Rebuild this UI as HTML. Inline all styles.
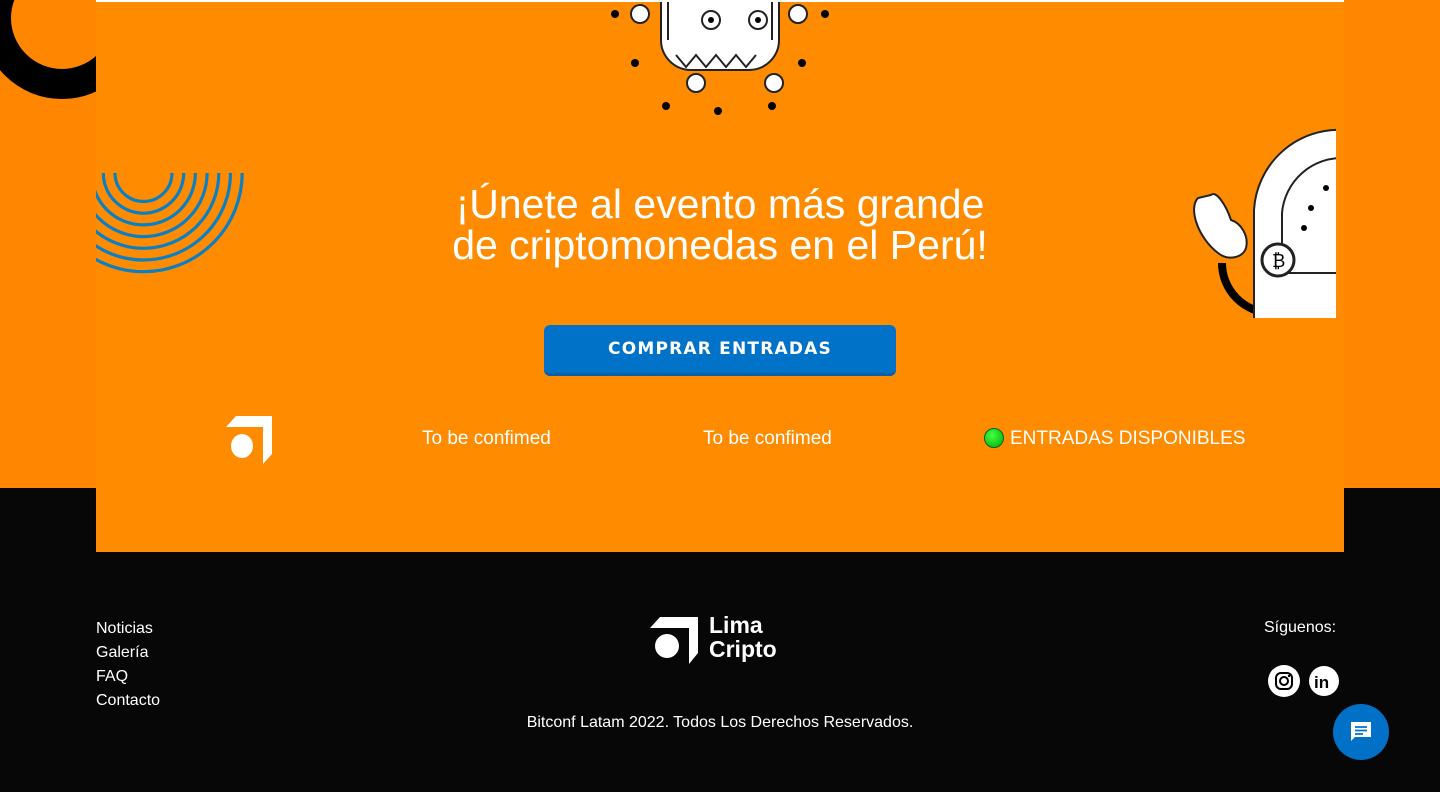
<!DOCTYPE html>
<html><head><meta charset="utf-8"><style>
*{margin:0;padding:0;box-sizing:border-box}
body{width:1440px;height:792px;overflow:hidden;background:#070707;font-family:"Liberation Sans",sans-serif;position:relative}
.top{position:absolute;left:0;top:0;width:1440px;height:488px;background:#ff8600}
.box{position:absolute;left:96px;top:0;width:1248px;height:552px;background:#ff8b00;overflow:hidden}
.line{position:absolute;left:96px;top:0;width:1248px;height:2px;background:#fff}
h1{position:absolute;left:0;width:1440px;top:184px;text-align:center;color:#fff;font-weight:normal;font-size:41px;line-height:41px}
.btn{position:absolute;left:544px;top:325px;width:352px;height:51px;background:#0072c7;border-radius:6px;border-bottom:3px solid #0560a8;color:#fff;text-align:center;font:bold 17px/48px "DejaVu Sans",sans-serif;letter-spacing:1.2px}
.t{position:absolute;top:428px;color:#fff;font-size:19px}
.f{position:absolute;color:#fff;font-size:16px}
</style></head><body>
<div class="top"></div>
<svg style="position:absolute;left:0;top:0" width="96" height="110"><circle cx="62" cy="18" r="66" fill="none" stroke="#000" stroke-width="30"/></svg>
<div class="box">
<svg style="position:absolute;left:0;top:173px" width="160" height="110">
<g fill="none" stroke="#0a7fc4" stroke-width="3.2" transform="translate(47.5,0)">
<path d="M-28.5 0a28.5 28.5 0 0 0 57 0"/><path d="M-40.2 0a40.2 40.2 0 0 0 80.4 0"/><path d="M-51.9 0a51.9 51.9 0 0 0 103.8 0"/><path d="M-63.6 0a63.6 63.6 0 0 0 127.2 0"/><path d="M-75.3 0a75.3 75.3 0 0 0 150.6 0"/><path d="M-87 0a87 87 0 0 0 174 0"/><path d="M-98.7 0a98.7 98.7 0 0 0 197.4 0"/></g></svg>
<svg style="position:absolute;left:500px;top:0" width="250" height="120">
<g stroke="#222" stroke-width="2">
<path d="M65 0v40a30 30 0 0 0 30 30h58a30 30 0 0 0 30-30V0z" fill="#fff"/>
<path d="M72 0v40M176 0v40M80 55l10 12 10-12 10 12 10-12 10 12 10-12 10 12 10-12" fill="none"/>
<circle cx="115" cy="20" r="9" fill="#fff"/><circle cx="162" cy="20" r="9" fill="#fff"/>
<circle cx="44" cy="14" r="9" fill="#fff"/><circle cx="202" cy="14" r="9" fill="#fff"/>
<circle cx="100" cy="83" r="9" fill="#fff"/><circle cx="178" cy="83" r="9" fill="#fff"/></g>
<g fill="#000"><circle cx="115" cy="20" r="3"/><circle cx="162" cy="20" r="3"/><circle cx="19" cy="14" r="4"/><circle cx="229" cy="14" r="4"/><circle cx="39" cy="63" r="4"/><circle cx="206" cy="63" r="4"/><circle cx="70" cy="106" r="4"/><circle cx="122" cy="111" r="4"/><circle cx="176" cy="106" r="4"/></g></svg>
<svg style="position:absolute;left:1090px;top:128px" width="150" height="190">
<path d="M36 135a50 50 0 0 0 100 0" fill="none" stroke="#000" stroke-width="8"/>
<path d="M158 2a85 85 0 0 0-90 80v110h90z" fill="#fff" stroke="#222" stroke-width="2"/>
<path d="M158 30a60 60 0 0 0-62 55v60h62z" fill="none" stroke="#222" stroke-width="2"/>
<circle cx="92" cy="132" r="16" fill="#fff" stroke="#222" stroke-width="3"/>
<text x="86" y="139" font-size="18" font-family="Liberation Sans">₿</text>
<path d="M12 70c-10 10 0 40 20 55 10 8 25 5 28-5 3-12-5-25-15-28-5-15-15-30-20-25z" fill="#fff" stroke="#222" stroke-width="2"/>
<g fill="#000"><circle cx="125" cy="80" r="3"/><circle cx="140" cy="60" r="3"/><circle cx="118" cy="100" r="3"/></g></svg>
<svg style="position:absolute;left:130px;top:416px" width="46" height="48"><path d="M10 0h36v38l-9 10V11H0z" fill="#fff"/><ellipse cx="16" cy="30" rx="11" ry="12" fill="#fff"/></svg>
</div>
<div class="line"></div>
<h1>¡Únete al evento más grande<br>de criptomonedas en el Perú!</h1>
<div class="btn">COMPRAR ENTRADAS</div>
<div class="t" style="left:422px">To be confimed</div>
<div class="t" style="left:703px">To be confimed</div>
<div class="t" style="left:984px"><span style="display:inline-block;width:20px;height:20px;border-radius:50%;background:radial-gradient(circle at 40% 35%,#4f4,#0a0);border:1px solid #060;vertical-align:-4px;margin-right:6px"></span>ENTRADAS DISPONIBLES</div>
<div class="f" style="left:96px;top:617px;line-height:24px">Noticias<br>Galería<br>FAQ<br>Contacto</div>
<svg style="position:absolute;left:650px;top:617px" width="48" height="47"><path d="M10 0h38v36l-9 11V11H0z" fill="#fff"/><ellipse cx="17" cy="29" rx="12" ry="12" fill="#fff"/></svg>
<div class="f" style="left:709px;top:613px;font-weight:bold;font-size:23px;line-height:24px">Lima<br>Cripto</div>
<div class="f" style="left:0;width:1440px;text-align:center;top:714px">Bitconf Latam 2022. Todos Los Derechos Reservados.</div>
<div class="f" style="left:1264px;top:619px">Síguenos:</div>
<svg style="position:absolute;left:1267px;top:664px" width="74" height="34">
<circle cx="17" cy="17" r="16" fill="#fff"/><rect x="9" y="9" width="16" height="16" rx="5" fill="none" stroke="#000" stroke-width="2"/><circle cx="17" cy="17" r="4" fill="none" stroke="#000" stroke-width="2"/><circle cx="22" cy="12" r="1.2"/>
<circle cx="57" cy="17" r="15" fill="#fff"/><text x="47" y="24" font-family="Liberation Sans" font-weight="bold" font-size="17">in</text></svg>
<div style="position:absolute;left:1333px;top:704px;width:56px;height:56px;border-radius:50%;background:#0071c7"></div>
<svg style="position:absolute;left:1350px;top:721px" width="22" height="22"><path d="M1 1h20v15H5l-4 4z" fill="#fff"/><path d="M5 6h12M5 9.5h12M5 13h8" stroke="#0071c7" stroke-width="1.8"/></svg>
</body></html>
